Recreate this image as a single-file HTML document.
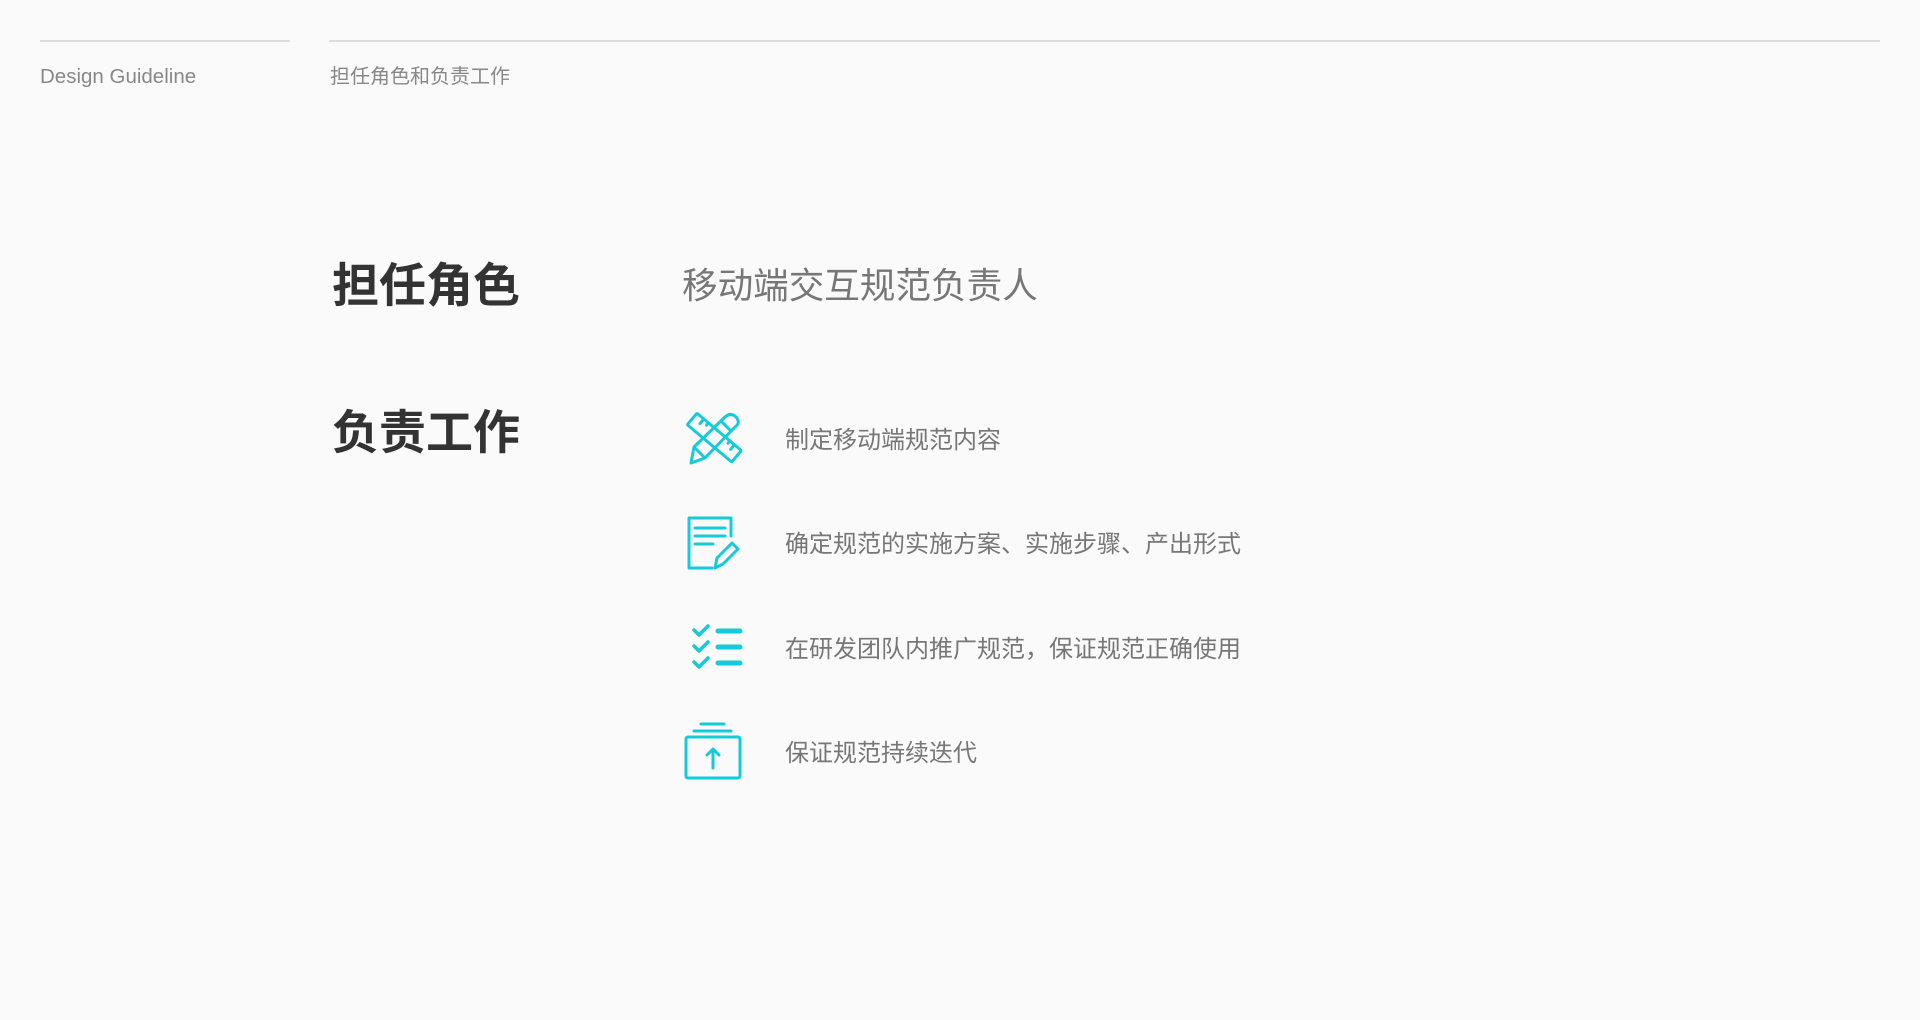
<!DOCTYPE html>
<html><head><meta charset="utf-8"><style>
html,body{margin:0;padding:0;width:1920px;height:1020px;background:#fafafa;overflow:hidden;position:relative;font-family:"Liberation Sans","Noto Sans CJK SC",sans-serif}
.a{position:absolute;white-space:nowrap}
.line{position:absolute;height:2px;background:#dcdcdc;top:40px}
.h{font-size:47px;font-weight:bold;color:#333;line-height:1}
.it{font-size:24px;color:#777;line-height:1}
svg{position:absolute;overflow:visible}
</style></head><body>
<div class="line" style="left:40px;width:250px"></div>
<div class="line" style="left:329px;width:1551px"></div>
<div class="a" style="left:40px;top:65px;font-size:20.5px;color:#888">Design Guideline</div>
<div class="a" style="left:330px;top:60px;font-size:20px;color:#888">担任角色和负责工作</div>

<div class="a h" style="left:332px;top:262px">担任角色</div>
<div class="a h" style="left:332px;top:409px">负责工作</div>
<div class="a" style="left:682px;top:269px;font-size:35.6px;color:#777;line-height:1">移动端交互规范负责人</div>

<div class="a it" style="left:785px;top:429px">制定移动端规范内容</div>
<div class="a it" style="left:785px;top:533px">确定规范的实施方案、实施步骤、产出形式</div>
<div class="a it" style="left:785px;top:638px">在研发团队内推广规范，保证规范正确使用</div>
<div class="a it" style="left:785px;top:742px">保证规范持续迭代</div>

<svg style="left:686px;top:412px" width="55" height="53" viewBox="0 0 55 53" fill="none" stroke="#16cbd9" stroke-width="3" stroke-linejoin="round" stroke-linecap="round">
 <g transform="rotate(40 28 26)"><rect x="-1" y="18" width="58" height="15" rx="1"/>
 <path d="M8 18v6M14 18v3M42 18v3M48 18v6"/></g>
 <path d="M5 51 L8 35 L39 5 Q45 0 50 5 Q55 11 49 15 L19 46 Z M8 35 L19 46 M35 9 L45 19"/>
</svg>

<svg style="left:687px;top:516px" width="53" height="54" viewBox="0 0 53 54" fill="none" stroke="#16cbd9" stroke-width="3" stroke-linecap="round" stroke-linejoin="round">
 <path d="M25 52 H2 V2 H44 V20"/>
 <path d="M8 12 H38 M8 20 H38 M8 28 H26"/>
 <path d="M28 52 L30 42 L45 27 L51 33 L36 48 Z"/>
</svg>

<svg style="left:692px;top:625px" width="50" height="45" viewBox="0 0 50 45" fill="none" stroke="#16cbd9" stroke-linecap="round" stroke-linejoin="round">
 <g stroke-width="3.5"><path d="M2 5 L7 10 L16 1"/><path d="M2 21 L7 26 L16 17"/><path d="M2 37 L7 42 L16 33"/></g>
 <g stroke-width="5"><path d="M26 6 H48 M26 22 H48 M26 38 H48"/></g>
</svg>

<svg style="left:684px;top:722px" width="58" height="58" viewBox="0 0 58 58" fill="none" stroke="#16cbd9" stroke-width="3" stroke-linecap="round" stroke-linejoin="round">
 <path d="M17 2 H40 M10 9 H47"/>
 <rect x="2" y="15" width="54" height="41" rx="2"/>
 <path d="M29 46 V27 M23 33 L29 27 L35 33"/>
</svg>
</body></html>
